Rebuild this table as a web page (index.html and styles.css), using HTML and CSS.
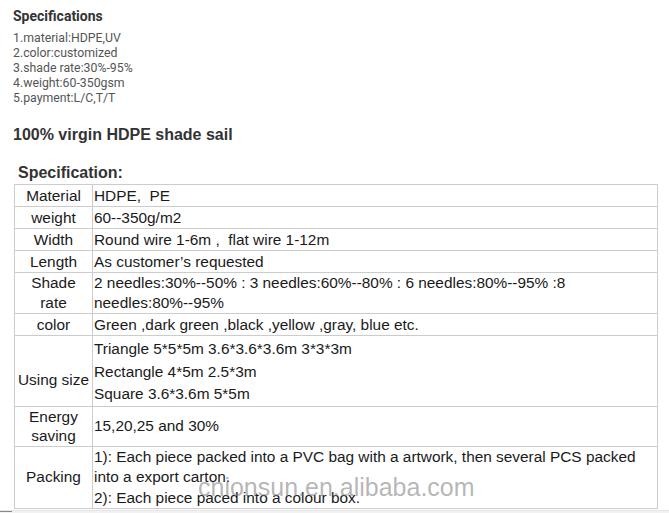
FILE: index.html
```html
<!DOCTYPE html>
<html>
<head>
<meta charset="utf-8">
<link rel="stylesheet" href="styles.css">
</head>
<body>
<div class="page">
  <div class="intro">
    <h3 class="spec-title">Specifications</h3>
    <div class="spec-list">
      1.material:HDPE,UV<br>
      2.color:customized<br>
      3.shade rate:30%-95%<br>
      4.weight:60-350gsm<br>
      5.payment:L/C,T/T
    </div>
    <h2 class="product-title">100% virgin HDPE shade sail</h2>
    <h3 class="table-title">Specification:</h3>
  </div>
  <table class="spec-table">
    <tr class="r1"><td class="lbl">Material</td><td class="val">HDPE,&nbsp; PE</td></tr>
    <tr class="r1"><td class="lbl">weight</td><td class="val">60--350g/m2</td></tr>
    <tr class="r1"><td class="lbl">Width</td><td class="val">Round wire 1-6m ,&nbsp; flat wire 1-12m</td></tr>
    <tr class="r1"><td class="lbl">Length</td><td class="val">As customer’s requested</td></tr>
    <tr class="r2"><td class="lbl">Shade<br>rate</td><td class="val">2 needles:30%--50% : 3 needles:60%--80% : 6 needles:80%--95% :8 needles:80%--95%</td></tr>
    <tr class="r1"><td class="lbl">color</td><td class="val">Green ,dark green ,black ,yellow ,gray, blue etc.</td></tr>
    <tr class="r3"><td class="lbl lbl-low">Using size</td><td class="val">Triangle 5*5*5m 3.6*3.6*3.6m 3*3*3m<br>Rectangle 4*5m 2.5*3m<br>Square 3.6*3.6m 5*5m</td></tr>
    <tr class="r4"><td class="lbl">Energy<br>saving</td><td class="val">15,20,25 and 30%</td></tr>
    <tr class="r5"><td class="lbl">Packing</td><td class="val">1): Each piece packed into a PVC bag with a artwork, then several PCS packed into a export carton.<br>2): Each piece paced into a colour box.</td></tr>
  </table>
  <div class="footer-strip"><span class="dash-mark"></span></div>
  <div class="watermark">cnionsun.en.alibaba.com</div>
</div>
</body>
</html>
```
FILE: styles.css
```css
html, body {
  margin: 0;
  padding: 0;
  background: #ffffff;
}

.page {
  position: relative;
  width: 669px;
  height: 513px;
  overflow: hidden;
}

.intro {
  padding: 8px 0 0 13px;
}

.spec-title {
  margin: 0;
  font-family: Roboto, "Liberation Sans", sans-serif;
  font-weight: 700;
  font-size: 14px;
  line-height: 16px;
  color: #333333;
}

.spec-list {
  margin-top: 7px;
  font-family: Roboto, "Liberation Sans", sans-serif;
  font-weight: 400;
  font-size: 12.3px;
  line-height: 15px;
  color: #555555;
}

.product-title {
  margin: 19px 0 0 0;
  font-family: "Liberation Sans", Arial, sans-serif;
  font-weight: 700;
  font-size: 16px;
  line-height: 20px;
  color: #333333;
}

.table-title {
  margin: 18px 0 0 0;
  padding-left: 5px;
  font-family: "Liberation Sans", Arial, sans-serif;
  font-weight: 700;
  font-size: 16px;
  line-height: 20px;
  color: #333333;
}

.spec-table {
  margin: 1px 0 0 14px;
  width: 644px;
  border-collapse: collapse;
  font-family: "Liberation Sans", Arial, sans-serif;
  font-size: 15.4px;
  color: #1a1a1a;
}

.spec-table td {
  border: 1px solid #cccccc;
  padding: 0 1px;
  vertical-align: middle;
}

.spec-table .lbl {
  width: 75px;
  text-align: center;
}

.spec-table .val {
  text-align: left;
  padding-left: 1px;
}

.r1 td { line-height: 21px; }
.r2 td { line-height: 20px; }
.r3 td { line-height: 22.5px; }
.r3 .val { padding-top: 2px; }
.r3 .lbl-low { padding-top: 18px; line-height: 20px; }
.r4 td { line-height: 19.5px; }
.r5 td { line-height: 20.5px; }

.footer-strip {
  position: relative;
  height: 10px;
  margin-top: 1px;
  background: #f2f2f2;
  border-top: 1px solid #e4e4e4;
}

.dash-mark {
  position: absolute;
  left: 0;
  top: 0;
  width: 12px;
  height: 1px;
  border-top: 1px solid #8a8a8a;
  border-bottom: 1px solid #8a8a8a;
}

.watermark {
  position: absolute;
  left: 198px;
  top: 475px;
  font-family: "Liberation Sans", Arial, sans-serif;
  font-size: 25px;
  line-height: 25px;
  color: rgba(120, 120, 120, 0.55);
  white-space: nowrap;
  pointer-events: none;
}
```
